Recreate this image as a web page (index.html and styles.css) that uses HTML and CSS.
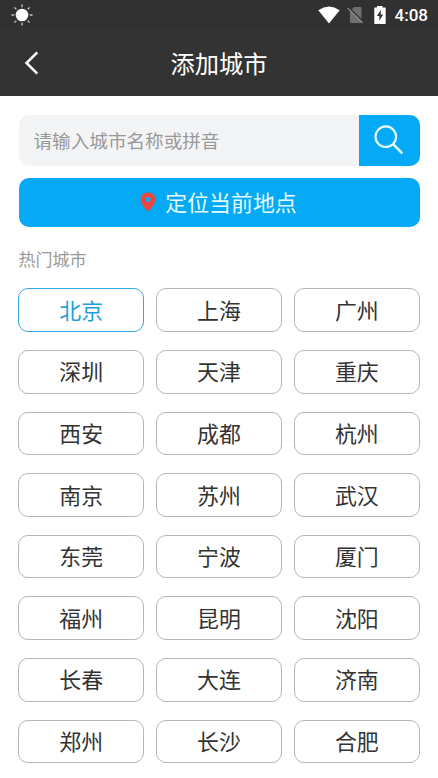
FILE: index.html
```html
<!DOCTYPE html>
<html lang="zh-CN">
<head>
<meta charset="utf-8">
<title>添加城市</title>
<link rel="stylesheet" href="styles.css">
</head>
<body>
<div class="status">
  <svg class="sun" width="22" height="22" viewBox="0 0 22 22"><circle cx="11" cy="11" r="6.3" fill="#fff"/><path d="M11 .5v2.700M11 18.800v2.700M.5 11h2.700M18.800 11h2.700M3.400 3.400l1.900 1.900M16.700 16.700l1.900 1.900M3.400 18.600l1.900-1.900M16.700 5.300l1.900-1.900" stroke="#c8c8c8" stroke-width="1.300"/></svg>
  <svg class="wifi" width="22" height="18" viewBox="0 0 22 18"><path d="M.3 4.200Q11-3.200 21.700 4.200L11 17.600z" fill="#fff"/></svg>
  <svg class="sim" width="17" height="18" viewBox="0 0 17 18"><path d="M7 1h6.300q1.200 0 1.200 1.200v13.600q0 1.200-1.200 1.200H4.200q-1.200 0-1.200-1.200V5z" fill="#707070"/><path d="M1.500 1.100L16.500 16.100" stroke="#333" stroke-width="1.400"/><path d="M.6 2L15.600 17" stroke="#858585" stroke-width="1.300"/></svg>
  <svg class="battery" width="12" height="18" viewBox="0 0 12 18"><path d="M3 0h5.500v1.500H11q.7 0 .7.700v15q0 .7-.7.700H1q-.7 0-.7-.7v-15q0-.7.700-.7h2z" fill="#fff"/><path d="M7 3.700L2.800 10h2.500v4.800L9.200 8.400H6.700z" fill="#333"/></svg>
  <span class="time">4:08</span>
</div>
<header class="header">
  <svg class="back" width="16" height="26" viewBox="0 0 16 26"><path d="M13.300 2.300L2.500 13l10.800 10.700" fill="none" stroke="#fff" stroke-width="2.500"/></svg>
  <h1 class="title">添加城市</h1>
</header>
<main class="content">
  <div class="search">
    <div class="field">请输入城市名称或拼音</div>
    <div class="go"><svg width="30" height="30" viewBox="0 0 30 30"><circle cx="11.800" cy="11.700" r="10.300" fill="none" stroke="#e4fbff" stroke-width="2.200"/><path d="M19 19l9.300 9.300" stroke="#e4fbff" stroke-width="2.500"/></svg></div>
  </div>
  <div class="locate">
    <svg class="pin" width="16" height="20" viewBox="0 0 16 20"><path fill-rule="evenodd" d="M8 .4C3.800.4.600 3.500.6 7.600c0 5 7.400 12 7.400 12s7.400-7 7.400-12C15.400 3.500 12.200.4 8 .4zM8 5a2.600 2.600 0 1 1 0 5.200A2.600 2.600 0 0 1 8 5z" fill="#f0443c"/></svg>
    <span>定位当前地点</span>
  </div>
  <h2 class="label">热门城市</h2>
  <div class="cities">
    <div class="city active">北京</div><div class="city">上海</div><div class="city">广州</div>
    <div class="city">深圳</div><div class="city">天津</div><div class="city">重庆</div>
    <div class="city">西安</div><div class="city">成都</div><div class="city">杭州</div>
    <div class="city">南京</div><div class="city">苏州</div><div class="city">武汉</div>
    <div class="city">东莞</div><div class="city">宁波</div><div class="city">厦门</div>
    <div class="city">福州</div><div class="city">昆明</div><div class="city">沈阳</div>
    <div class="city">长春</div><div class="city">大连</div><div class="city">济南</div>
    <div class="city">郑州</div><div class="city">长沙</div><div class="city">合肥</div>
  </div>
</main>
</body>
</html>
```
FILE: styles.css
```css
* { box-sizing: border-box; }
body {
  margin: 0;
  height: 778px;
  overflow: hidden;
  background: #fff;
  color: #333;
  font-family: "Noto Sans CJK SC", sans-serif;
}
svg { display: block; flex: none; }
.status {
  height: 29px;
  padding: 0 10px 0 11px;
  display: flex;
  align-items: center;
  background: #313131;
}
.wifi { margin-left: auto; }
.sim { margin-left: 7px; }
.battery { margin-left: 10px; }
.time {
  margin-left: 9px;
  font: 500 17px/29px Roboto, sans-serif;
  color: #fff;
  padding-top: 2px;
}
.header {
  height: 67.400px;
  display: grid;
  grid-template-columns: 48px 1fr 48px;
  align-items: center;
  background: #333;
}
.back { margin-left: 24px; }
.title {
  margin: 0;
  text-align: center;
  color: #fff;
  font-size: 24.300px;
  font-weight: 400;
  line-height: 36px;
}
.content { padding: 18.600px 18px 0; }
.search {
  height: 51px;
  margin: 0 .5px;
  display: flex;
  border-radius: 10px;
  overflow: hidden;
  background: #f3f4f6;
}
.field {
  flex: 1;
  padding-left: 15px;
  font-size: 18.600px;
  line-height: 50px;
  color: #999;
}
.go {
  width: 61px;
  display: flex;
  align-items: center;
  justify-content: center;
  background: #05a9f5;
}
.locate {
  height: 49px;
  margin: 12px .5px 0;
  padding: 0 1px 2px 0;
  display: flex;
  align-items: center;
  justify-content: center;
  gap: 9px;
  border-radius: 10px;
  background: #05a9f5;
  color: #e4fbff;
  font-size: 21.900px;
}
.pin { margin-top: 2px; }
.label {
  margin: 19px 0 0 .5px;
  font-size: 17px;
  font-weight: 400;
  line-height: 26px;
  color: #999;
}
.cities {
  margin-top: 16.500px;
  display: grid;
  grid-template-columns: repeat(3, 1fr);
  grid-auto-rows: 43.600px;
  gap: 18px 11.500px;
}
.city {
  display: flex;
  align-items: center;
  justify-content: center;
  padding-bottom: 1px;
  border: 1px solid #b5b5b5;
  border-radius: 10px;
  font-size: 21.900px;
  line-height: 32px;
}
.active { border-color: #35a9df; color: #1e9fdc; }
```
